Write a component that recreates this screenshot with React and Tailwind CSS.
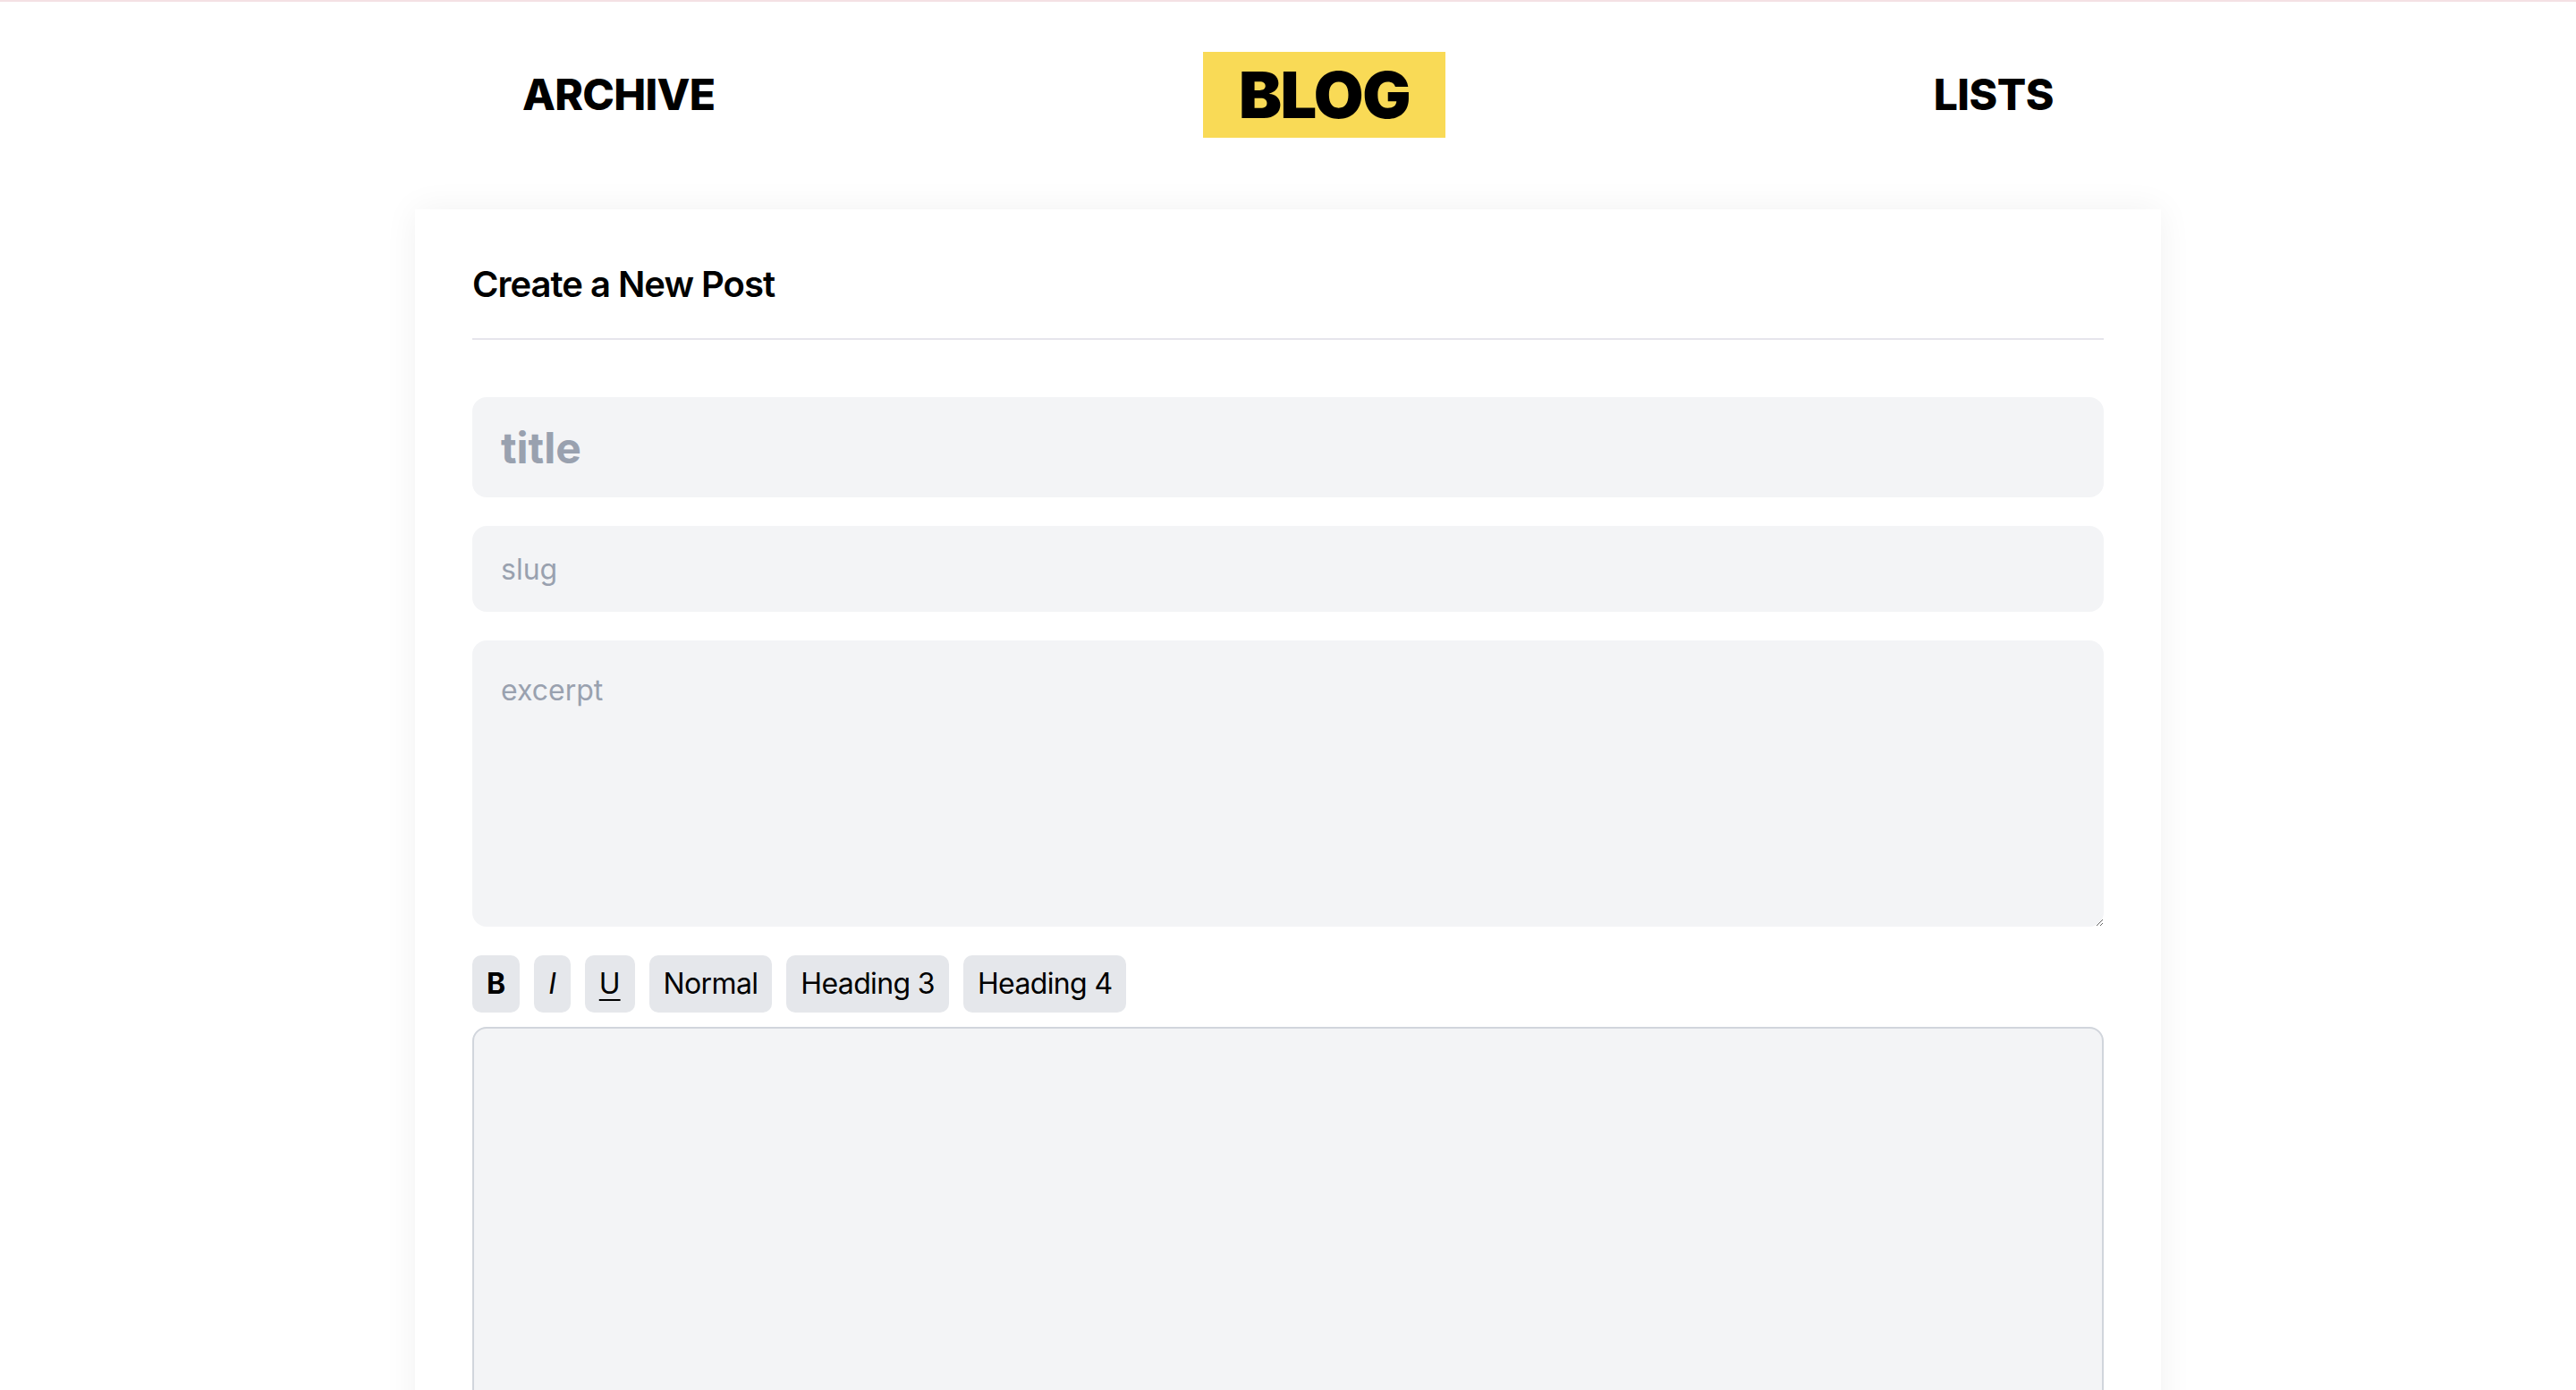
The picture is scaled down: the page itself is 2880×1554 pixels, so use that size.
import React from "react";

const toolbarButtons = [
  { label: "B", className: "font-bold" },
  { label: "I", className: "italic" },
  { label: "U", className: "underline underline-offset-[6px] decoration-2" },
  { label: "Normal", className: "tracking-[-0.02em]" },
  { label: "Heading 3", className: "tracking-[-0.02em]" },
  { label: "Heading 4", className: "tracking-[-0.02em]" },
];

function Nav() {
  return (
    <nav className="pt-14 max-w-[1712px] mx-auto flex items-center justify-between">
      <a href="#" className="text-[48px] leading-[64px] font-extrabold tracking-[-0.015em] text-black">
        ARCHIVE
      </a>
      <a
        href="#"
        className="bg-[#f9da56] px-10 py-2 text-[72px] leading-[80px] font-black tracking-[-0.02em] text-black"
      >
        BLOG
      </a>
      <a href="#" className="text-[48px] leading-[64px] font-extrabold tracking-[-0.01em] text-black">
        LISTS
      </a>
    </nav>
  );
}

function PostForm() {
  return (
    <div className="mt-[80px] mx-auto w-[1952px] bg-white px-16 pt-[56px] pb-16 shadow-[0_0_36px_rgba(0,0,0,0.06)]">
      {/* Header */}
      <h2 className="text-[40px] leading-[56px] font-semibold tracking-[-0.025em] text-black pb-8 border-b-2 border-[#e6e5ec]">
        Create a New Post
      </h2>

      <input
        type="text"
        placeholder="title"
        className="mt-16 block w-full h-[112px] px-8 rounded-2xl bg-gray-100 text-[48px] font-bold placeholder:text-gray-400 outline-none"
      />

      <input
        type="text"
        placeholder="slug"
        className="mt-8 block w-full h-24 px-8 rounded-2xl bg-gray-100 text-[32px] placeholder:text-gray-400 outline-none"
      />

      <textarea
        placeholder="excerpt"
        className="mt-8 block w-full h-[320px] px-8 pt-8 rounded-2xl bg-gray-100 text-[32px] leading-[48px] placeholder:text-gray-400 outline-none resize-y"
      />

      {/* Toolbar */}
      <div className="mt-8 flex gap-4">
        {toolbarButtons.map((btn) => (
          <button
            key={btn.label}
            type="button"
            className={`h-16 px-4 rounded-[10px] bg-gray-200 text-[32px] text-black ${btn.className}`}
          >
            {btn.label}
          </button>
        ))}
      </div>

      {/* Editor */}
      <div className="mt-4 h-[700px] rounded-2xl border-2 border-gray-300 bg-gray-100" />
    </div>
  );
}

export default function App() {
  return (
    <div className="min-h-screen bg-white font-['Inter',sans-serif] border-t-2 border-[#f4e1e4]">
      <Nav />
      <PostForm />
    </div>
  );
}
